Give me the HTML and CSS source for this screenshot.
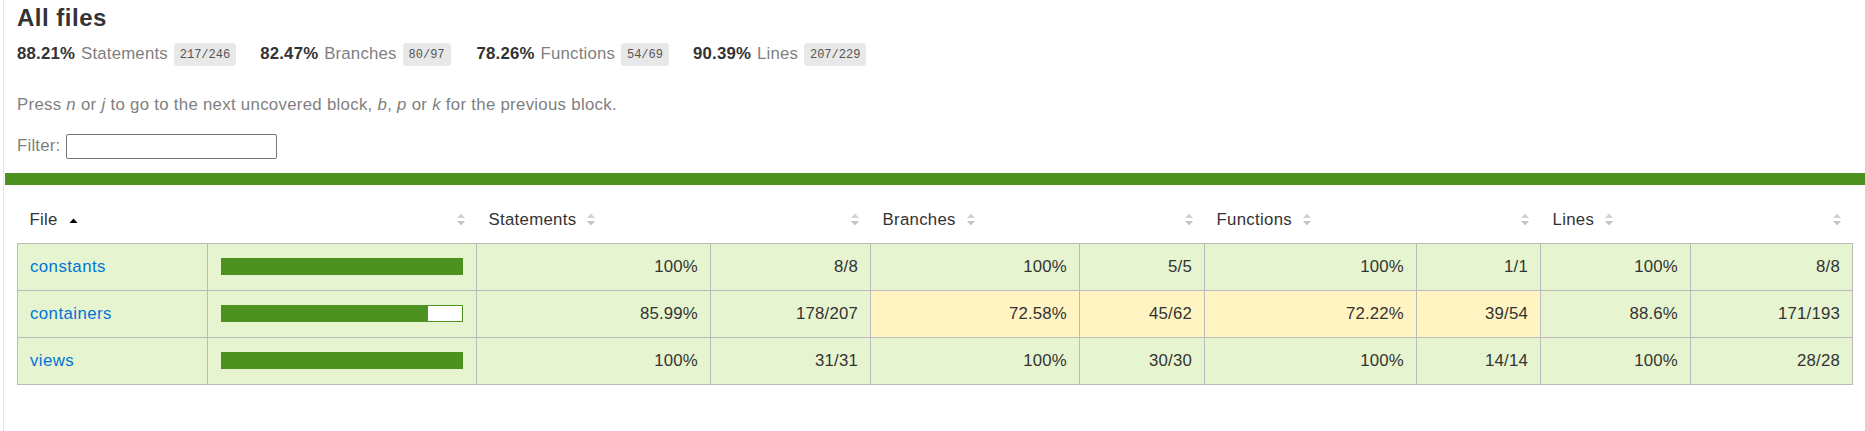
FILE: index.html
```html
<!DOCTYPE html>
<html lang="en">
<head>
<meta charset="utf-8">
<title>Code coverage report for All files</title>
<link rel="stylesheet" href="styles.css">
</head>
<body>
<div class="frame">
  <div class="head">
    <h1>All files</h1>
    <div class="stats">
      <div class="stat"><span class="strong">88.21% </span><span class="quiet">Statements</span> <span class="fraction">217/246</span></div>
      <div class="stat"><span class="strong">82.47% </span><span class="quiet">Branches</span> <span class="fraction">80/97</span></div>
      <div class="stat"><span class="strong">78.26% </span><span class="quiet">Functions</span> <span class="fraction">54/69</span></div>
      <div class="stat"><span class="strong">90.39% </span><span class="quiet">Lines</span> <span class="fraction">207/229</span></div>
    </div>
    <p class="quiet hint">Press <em>n</em> or <em>j</em> to go to the next uncovered block, <em>b</em>, <em>p</em> or <em>k</em> for the previous block.</p>
    <div class="quiet filter"><span>Filter:</span><input type="search" class="search"></div>
  </div>
  <div class="status-line"></div>
  <div class="pad">
    <table class="summary">
      <colgroup>
        <col class="c-file"><col class="c-pic"><col class="c-spct"><col class="c-sabs"><col class="c-bpct"><col class="c-babs"><col class="c-fpct"><col class="c-fabs"><col class="c-lpct"><col>
      </colgroup>
      <thead>
        <tr>
          <th class="file">File<svg class="sorter" width="9" height="12" viewBox="0 0 9 12"><path d="M0.5 9 L4.5 4.5 L8.5 9 Z" fill="#000"/></svg></th>
          <th class="r"><svg class="sorter" width="8" height="13" viewBox="0 0 8 13"><path d="M0 5 L4 0.5 L8 5 Z" fill="#d2d2d2"/><path d="M0 8 L4 12.5 L8 8 Z" fill="#c4c4c4"/></svg></th>
          <th>Statements<svg class="sorter" width="8" height="13" viewBox="0 0 8 13"><path d="M0 5 L4 0.5 L8 5 Z" fill="#d2d2d2"/><path d="M0 8 L4 12.5 L8 8 Z" fill="#c4c4c4"/></svg></th>
          <th class="r"><svg class="sorter" width="8" height="13" viewBox="0 0 8 13"><path d="M0 5 L4 0.5 L8 5 Z" fill="#d2d2d2"/><path d="M0 8 L4 12.5 L8 8 Z" fill="#c4c4c4"/></svg></th>
          <th>Branches<svg class="sorter" width="8" height="13" viewBox="0 0 8 13"><path d="M0 5 L4 0.5 L8 5 Z" fill="#d2d2d2"/><path d="M0 8 L4 12.5 L8 8 Z" fill="#c4c4c4"/></svg></th>
          <th class="r"><svg class="sorter" width="8" height="13" viewBox="0 0 8 13"><path d="M0 5 L4 0.5 L8 5 Z" fill="#d2d2d2"/><path d="M0 8 L4 12.5 L8 8 Z" fill="#c4c4c4"/></svg></th>
          <th>Functions<svg class="sorter" width="8" height="13" viewBox="0 0 8 13"><path d="M0 5 L4 0.5 L8 5 Z" fill="#d2d2d2"/><path d="M0 8 L4 12.5 L8 8 Z" fill="#c4c4c4"/></svg></th>
          <th class="r"><svg class="sorter" width="8" height="13" viewBox="0 0 8 13"><path d="M0 5 L4 0.5 L8 5 Z" fill="#d2d2d2"/><path d="M0 8 L4 12.5 L8 8 Z" fill="#c4c4c4"/></svg></th>
          <th>Lines<svg class="sorter" width="8" height="13" viewBox="0 0 8 13"><path d="M0 5 L4 0.5 L8 5 Z" fill="#d2d2d2"/><path d="M0 8 L4 12.5 L8 8 Z" fill="#c4c4c4"/></svg></th>
          <th class="r"><svg class="sorter" width="8" height="13" viewBox="0 0 8 13"><path d="M0 5 L4 0.5 L8 5 Z" fill="#d2d2d2"/><path d="M0 8 L4 12.5 L8 8 Z" fill="#c4c4c4"/></svg></th>
        </tr>
      </thead>
      <tbody>
        <tr>
          <td class="file high"><a href="#">constants</a></td>
          <td class="pic high"><div class="chart"><div class="cover-fill" style="width: 100%"></div></div></td>
          <td class="num high">100%</td>
          <td class="num high">8/8</td>
          <td class="num high">100%</td>
          <td class="num high">5/5</td>
          <td class="num high">100%</td>
          <td class="num high">1/1</td>
          <td class="num high">100%</td>
          <td class="num high">8/8</td>
        </tr>
        <tr>
          <td class="file high"><a href="#">containers</a></td>
          <td class="pic high"><div class="chart"><div class="cover-fill" style="width: 85.99%"></div><div class="cover-empty"></div></div></td>
          <td class="num high">85.99%</td>
          <td class="num high">178/207</td>
          <td class="num medium">72.58%</td>
          <td class="num medium">45/62</td>
          <td class="num medium">72.22%</td>
          <td class="num medium">39/54</td>
          <td class="num high">88.6%</td>
          <td class="num high">171/193</td>
        </tr>
        <tr>
          <td class="file high"><a href="#">views</a></td>
          <td class="pic high"><div class="chart"><div class="cover-fill" style="width: 100%"></div></div></td>
          <td class="num high">100%</td>
          <td class="num high">31/31</td>
          <td class="num high">100%</td>
          <td class="num high">30/30</td>
          <td class="num high">100%</td>
          <td class="num high">14/14</td>
          <td class="num high">100%</td>
          <td class="num high">28/28</td>
        </tr>
      </tbody>
    </table>
  </div>
</div>
</body>
</html>
```

FILE: styles.css
```css
html, body {
  margin: 0;
  padding: 0;
  background: #fff;
}
body {
  font-family: "Liberation Sans", Arial, Helvetica, sans-serif;
  font-size: 16.8px;
  color: #333;
  letter-spacing: 0.2px;
}
.frame {
  margin-left: 3px;
  border-left: 1px solid #e6e6e6;
  padding-left: 1px;
  min-height: 431px;
  box-sizing: border-box;
}
.head {
  padding: 4px 12px 12px;
}
h1 {
  font-size: 24px;
  font-weight: bold;
  margin: 0;
  letter-spacing: 0.5px;
}
.stats {
  display: flex;
  padding: 12px 0 14px;
}
.stat {
  margin-right: 24px;
  word-spacing: 1px;
}
.stat:nth-child(1) { margin-right: 24px; }
.stat:nth-child(2) { margin-right: 26px; }
.stat:nth-child(3) { margin-right: 24px; }
.strong {
  font-weight: bold;
}
.quiet {
  color: #7f7f7f;
}
.fraction {
  font-family: "Liberation Mono", Consolas, monospace;
  font-size: 12px;
  letter-spacing: 0;
  color: #555;
  background: #e8e8e8;
  padding: 4.8px 6px;
  border-radius: 3.6px;
  vertical-align: middle;
  word-spacing: 0;
}
.hint {
  margin: 16.8px 0;
  letter-spacing: 0.3px;
}
.filter {
  display: flex;
  align-items: center;
  height: 29px;
}
.search {
  width: 211px;
  height: 25px;
  box-sizing: border-box;
  margin: 0 0 0 6px;
  padding: 0;
  border: 1px solid #767676;
  border-radius: 2px;
  background: #fff;
}
.status-line {
  height: 12px;
  background: #4d9221;
}
.pad {
  padding: 12px;
}
.summary {
  border-collapse: collapse;
  width: 100%;
  table-layout: fixed;
}
.c-file { width: 190px; }
.c-pic { width: 269px; }
.c-spct { width: 234px; }
.c-sabs { width: 160px; }
.c-bpct { width: 209px; }
.c-babs { width: 125px; }
.c-fpct { width: 212px; }
.c-fabs { width: 124px; }
.c-lpct { width: 150px; }
.summary tr {
  border-bottom: 1px solid #bbb;
}
.summary tbody {
  border: 1px solid #bbb;
}
.summary th {
  text-align: left;
  font-weight: normal;
  white-space: nowrap;
  padding: 12px;
  line-height: 22px;
  letter-spacing: 0.3px;
}
.summary th.r {
  text-align: right;
}
.sorter {
  margin-left: 11px;
  vertical-align: -1px;
}
.summary th.r .sorter {
  margin-left: 0;
}
.summary td {
  padding: 12px;
  line-height: 22px;
  border-right: 1px solid #bbb;
  white-space: nowrap;
  vertical-align: middle;
}
.summary td:last-child {
  border-right: none;
}
.summary td.num {
  text-align: right;
}
.high {
  background: #e6f5d0;
}
.medium {
  background: #fff4c2;
}
a {
  color: #0074d9;
  text-decoration: none;
  letter-spacing: 0.45px;
}
.chart {
  display: flex;
  line-height: 0;
  height: 17px;
  margin: 0 1px;
  border: 1px solid #4d9221;
  box-sizing: border-box;
}
.cover-fill {
  height: 100%;
  background: #4d9221;
}
.cover-empty {
  flex: 1;
  height: 100%;
  background: #fff;
}
```
